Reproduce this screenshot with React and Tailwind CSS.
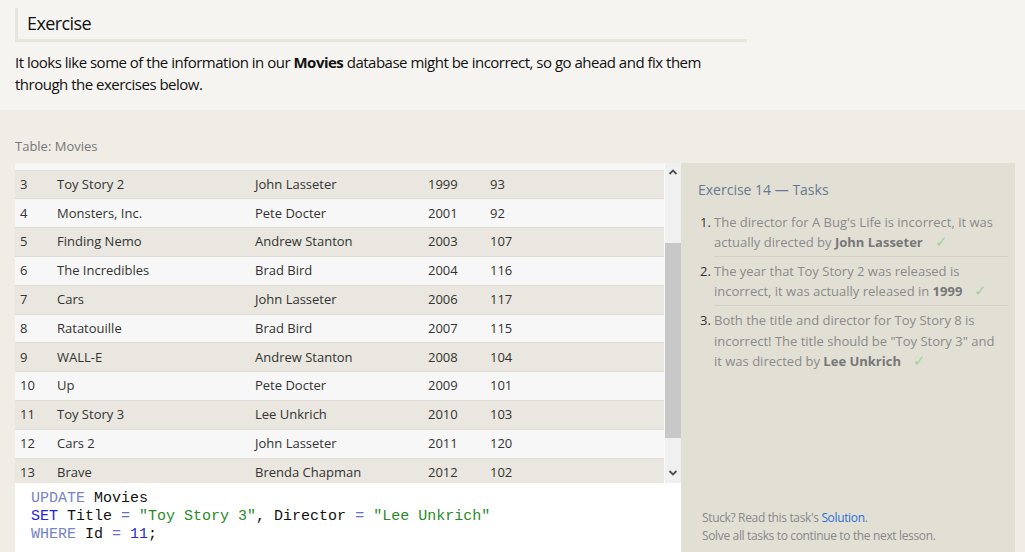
import React from "react";

const rows = [
  [3, "Toy Story 2", "John Lasseter", 1999, 93],
  [4, "Monsters, Inc.", "Pete Docter", 2001, 92],
  [5, "Finding Nemo", "Andrew Stanton", 2003, 107],
  [6, "The Incredibles", "Brad Bird", 2004, 116],
  [7, "Cars", "John Lasseter", 2006, 117],
  [8, "Ratatouille", "Brad Bird", 2007, 115],
  [9, "WALL-E", "Andrew Stanton", 2008, 104],
  [10, "Up", "Pete Docter", 2009, 101],
  [11, "Toy Story 3", "Lee Unkrich", 2010, 103],
  [12, "Cars 2", "John Lasseter", 2011, 120],
  [13, "Brave", "Brenda Chapman", 2012, 102],
];

function Check() {
  return <span className="ml-3 text-[15px] leading-[1] text-[#9ad49a]">✓</span>;
}

export default function App() {
  return (
    <div className="w-[1025px] h-[552px] overflow-hidden font-['Open_Sans',sans-serif] bg-[#efede6]">
      <div className="bg-[#f5f4f0] h-[110px] px-[15px] pt-[8px]">
        <div className="w-[732px] h-[34px] border-l-[3px] border-b-[3px] border-[#e7e5dc] pl-[9px] flex items-center">
          <span className="text-[18px] text-[#111] tracking-[-0.6px]">Exercise</span>
        </div>
        <p className="mt-[9px] text-[15px] leading-[22px] text-[#111] tracking-[-0.5px] w-[728px]">
          It looks like some of the information in our <b>Movies</b> database might be incorrect, so go ahead and fix them through the exercises below.
        </p>
      </div>
      <div className="pl-[15px] pr-[10px] pt-[26px] h-[442px] flex flex-col">
        <div className="text-[13px] leading-[20px] text-[#777] mb-[7px]">Table: Movies</div>
        <div className="flex flex-1 min-h-0">
          <div className="w-[666px] shrink-0 flex flex-col">
            <div className="flex h-[320px]">
              <div className="w-[649px] overflow-hidden bg-[#f7f7f7]">
                <div className="h-[7.6px] border-b border-[#e2e0d8] bg-[#f7f7f7]" />
                {rows.map((r, i) => (
                  <div
                    key={r[0]}
                    className={`flex items-center h-[28.8px] border-b border-[#dedcd4] text-[13px] text-[#333] ${i % 2 === 0 ? "bg-[#e9e7df]" : "bg-[#f7f7f7]"}`}
                  >
                    <div className="w-[42px] pl-[5px]">{r[0]}</div>
                    <div className="w-[198px]">{r[1]}</div>
                    <div className="w-[173px]">{r[2]}</div>
                    <div className="w-[62px]">{r[3]}</div>
                    <div>{r[4]}</div>
                  </div>
                ))}
              </div>
              <div className="w-[17px] bg-[#f0f0f0] flex flex-col items-center border-l border-[#fafafa]">
                <svg width="10" height="8" viewBox="0 0 10 8" className="mt-[5px]">
                  <path d="M1.5 6 L5 2.5 L8.5 6" stroke="#505050" strokeWidth="1.8" fill="none" />
                </svg>
                <div className="mt-[67px] w-[16px] h-[195px] bg-[#c8c8c8]" />
                <div className="flex-1" />
                <svg width="10" height="8" viewBox="0 0 10 8" className="mb-[6px]">
                  <path d="M1.5 2 L5 5.5 L8.5 2" stroke="#505050" strokeWidth="1.8" fill="none" />
                </svg>
              </div>
            </div>
            <div className="flex-1 bg-white pl-[16px] pt-[7px] font-['Liberation_Mono',monospace] text-[15px] leading-[18px] text-[#111] whitespace-pre">
              <div><span className="text-[#7683c6]">UPDATE</span> Movies</div>
              <div>
                <span className="text-[#2222ee]">SET</span> Title <span className="text-[#6570c0]">=</span>{" "}
                <span className="text-[#2a8a2a]">"Toy Story 3"</span>, Director <span className="text-[#6570c0]">=</span>{" "}
                <span className="text-[#2a8a2a]">"Lee Unkrich"</span>
              </div>
              <div><span className="text-[#7683c6]">WHERE</span> Id <span className="text-[#6570c0]">=</span> <span className="text-[#2a2ad8]">11</span>;</div>
            </div>
          </div>
          <div className="w-[334px] shrink-0 bg-[#e2e0d5] pl-[17px] pr-[7px] pt-[16px] flex flex-col">
            <div className="text-[14px] leading-[22px] text-[#687890]">Exercise 14 — Tasks</div>
            <div className="mt-[11px] text-[13px] leading-[20px] text-[#8a8a8a]">
              <div className="flex pb-[4px]">
                <span className="w-[16px] shrink-0 text-[#333] pl-[2px]">1.</span>
                <div className="flex-1 border-b border-[#d4d2c6] pb-[4px]">
                  The director for A Bug's Life is incorrect, it was actually directed by <b className="text-[#777]">John Lasseter</b>
                  <Check />
                </div>
              </div>
              <div className="flex pb-[4px]">
                <span className="w-[16px] shrink-0 text-[#333] pl-[2px]">2.</span>
                <div className="flex-1 border-b border-[#d4d2c6] pb-[4px]">
                  The year that Toy Story 2 was released is incorrect, it was actually released in <b className="text-[#777]">1999</b>
                  <Check />
                </div>
              </div>
              <div className="flex">
                <span className="w-[16px] shrink-0 text-[#333] pl-[2px]">3.</span>
                <div className="flex-1 pr-[6px] leading-[20.5px]">
                  Both the title and director for Toy Story 8 is incorrect! The title should be "Toy Story 3" and it was directed by <b className="text-[#777]">Lee Unkrich</b>
                  <Check />
                </div>
              </div>
            </div>
            <div className="flex-1" />
            <div className="text-[12px] leading-[18px] text-[#888] pl-[4px] mb-[7px] tracking-[-0.35px]">
              <div>Stuck? Read this task's <span className="text-[#2c6fd6]">Solution</span>.</div>
              <div>Solve all tasks to continue to the next lesson.</div>
            </div>
          </div>
        </div>
      </div>
    </div>
  );
}
